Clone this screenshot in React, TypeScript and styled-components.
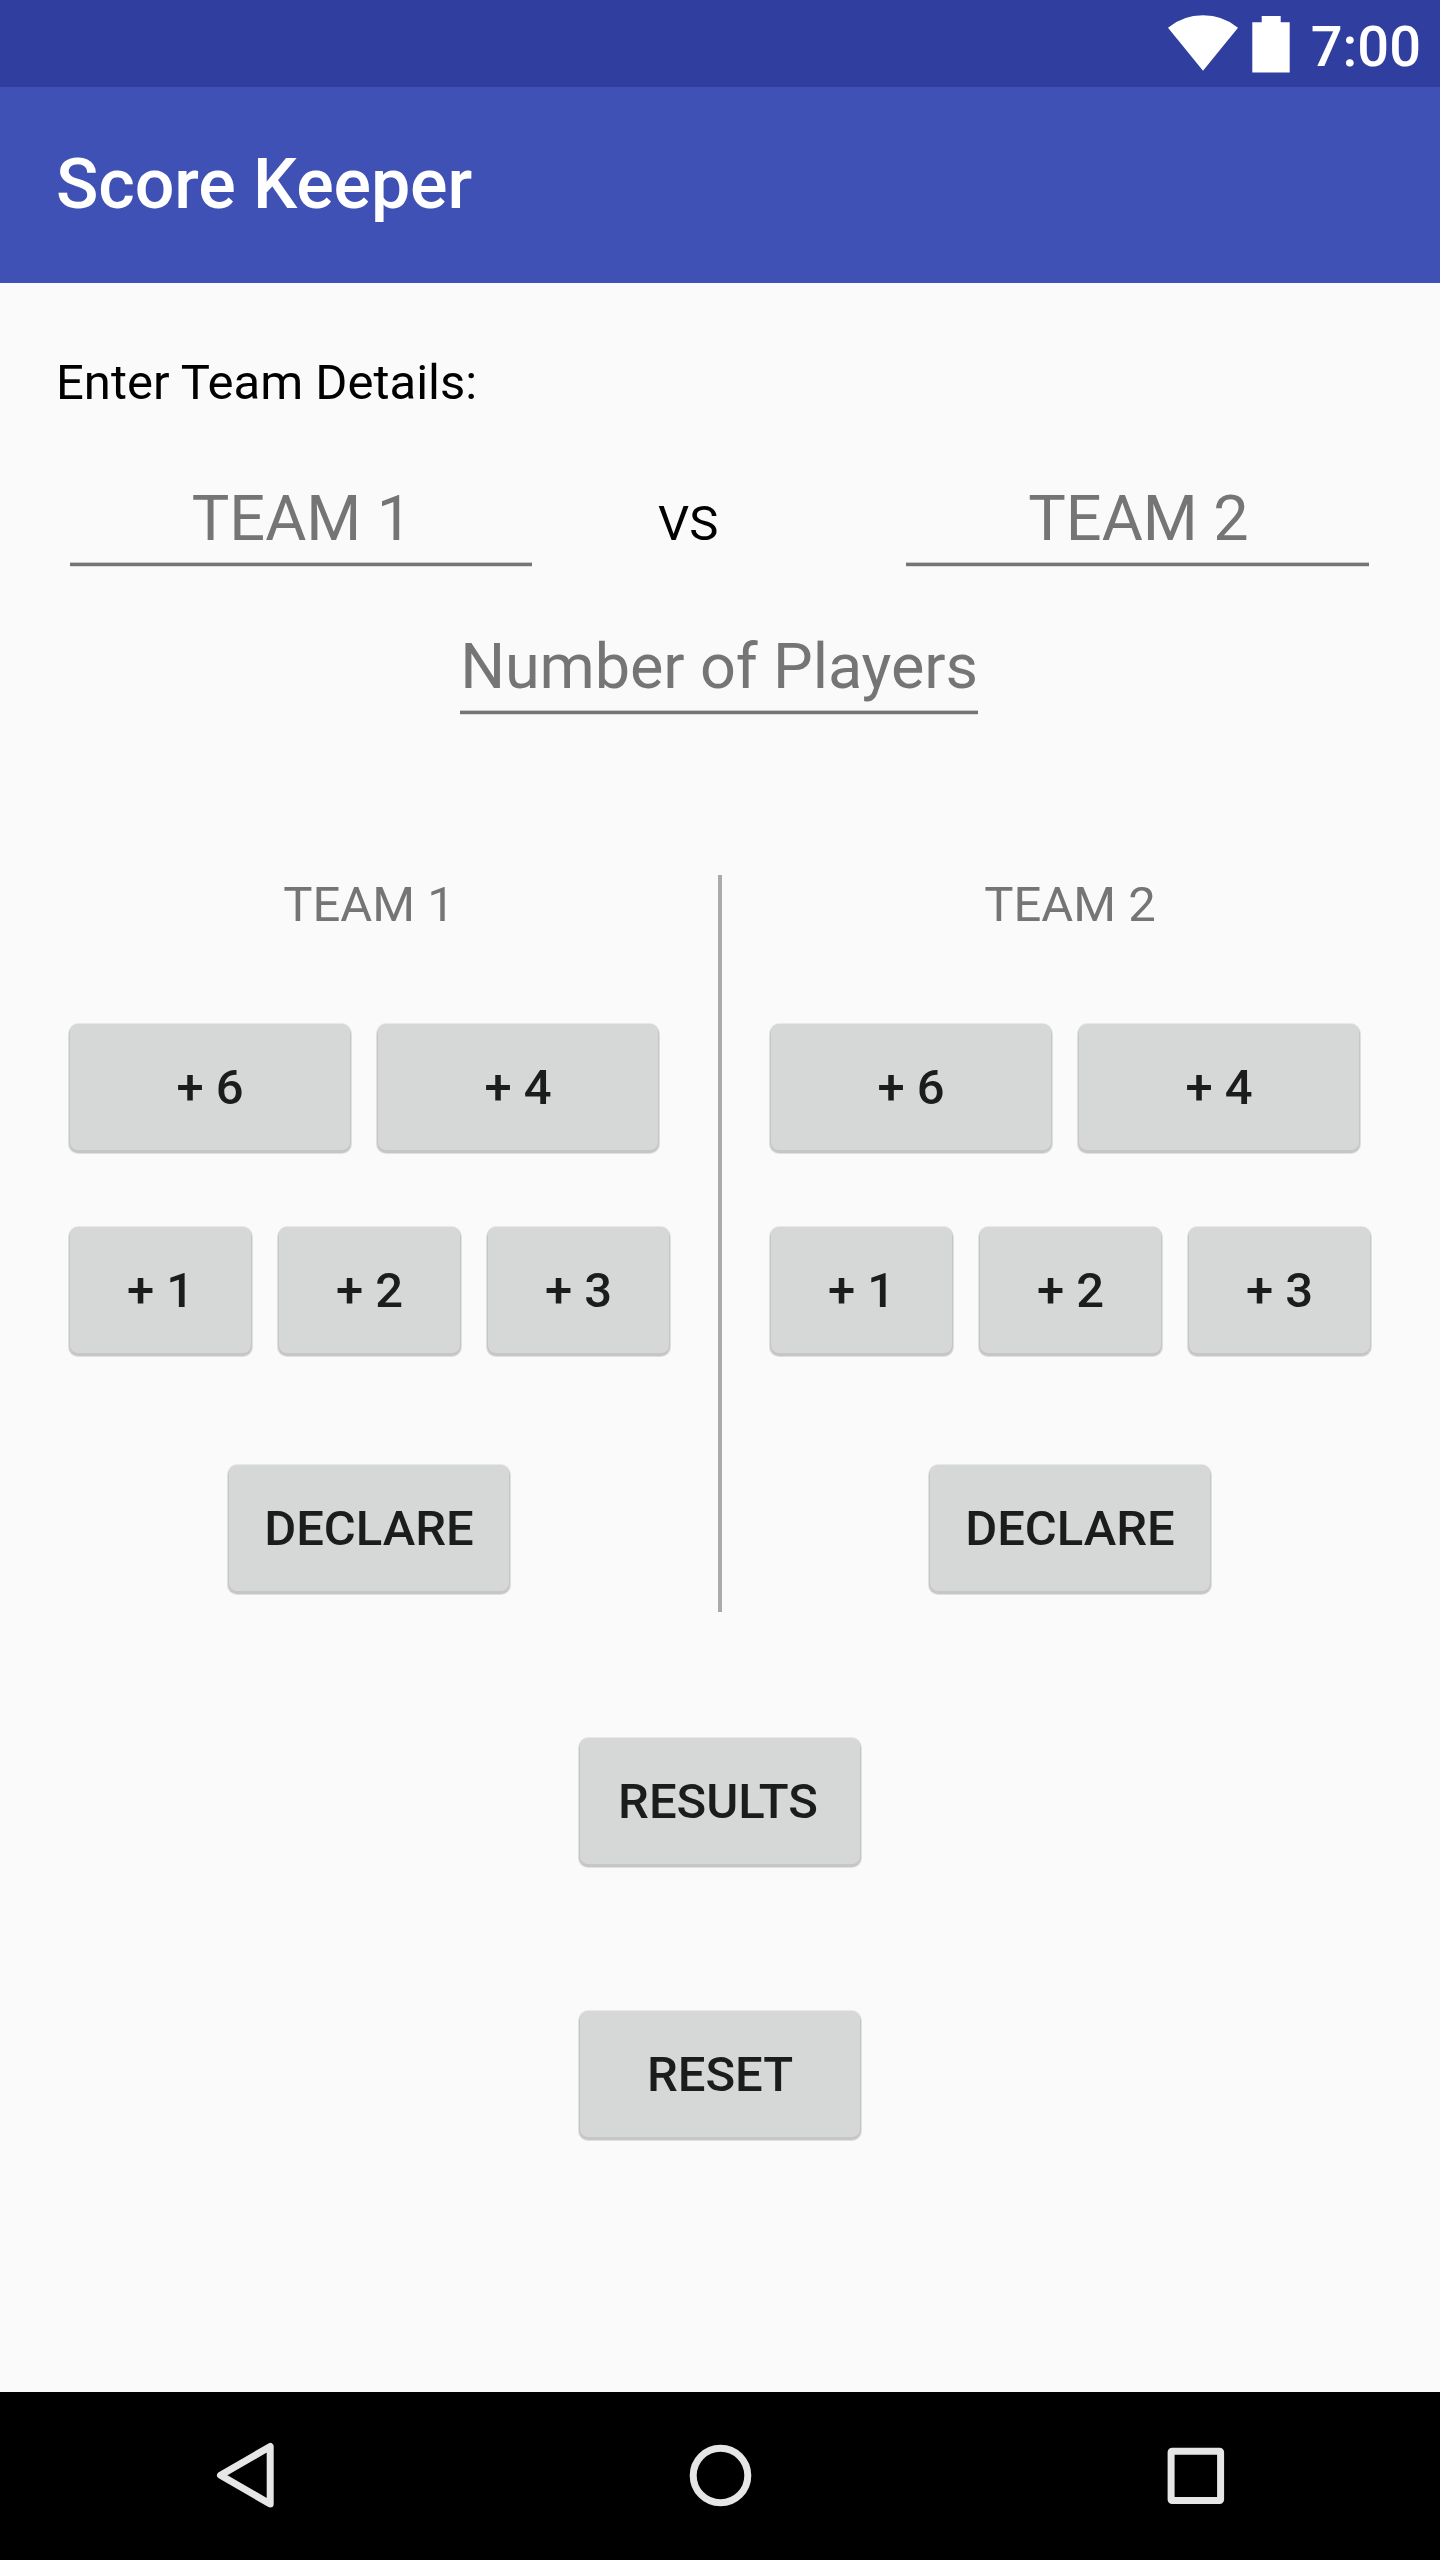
import React from "react";
import styled, { createGlobalStyle } from "styled-components";

const GlobalStyle = createGlobalStyle`
  body { margin: 0; background: #fafafa; }
  * { box-sizing: border-box; }
`;

const Screen = styled.div`
  width: 1440px;
  height: 2560px;
  display: flex;
  flex-direction: column;
  background: #fafafa;
  font-family: Roboto, "Liberation Sans", sans-serif;
  color: #000;
  overflow: hidden;
`;

const StatusBar = styled.header`
  height: 87px;
  flex: none;
  background: #303f9f;
  color: #fff;
  display: flex;
  justify-content: flex-end;
  padding-right: 19px;
`;

const StatusIcons = styled.svg`
  width: 124px;
  height: 87px;
`;

const Clock = styled.span`
  width: 129px;
  padding-top: 14px;
  font-size: 56px;
  font-weight: 500;
  line-height: 66px;
  text-align: right;
`;

const AppBar = styled.div`
  height: 196px;
  flex: none;
  background: #3f51b5;
  padding: 56px 56px 0;
`;

const Title = styled.h1`
  margin: 0;
  color: #fff;
  font-size: 70px;
  font-weight: 500;
  line-height: 82px;
  letter-spacing: -0.12px;
`;

const Content = styled.main`
  flex: 1;
  padding: 71px 56px 0;
  display: flex;
  flex-direction: column;
`;

const Caption = styled.p`
  margin: 0;
  font-size: 49px;
  line-height: 57px;
`;

const TeamsRow = styled.div`
  display: flex;
  align-items: baseline;
  height: 89px;
  margin-top: 66px;
`;

const Field = styled.div<{ $width: number }>`
  width: ${(p) => p.$width}px;
  height: 89px;
  border-bottom: 3px solid #757575;
  box-shadow: inset 0 -1px 0 #c8c8c8, 0 1px 0 #dcdcdc;
  color: #757575;
  font-size: 63px;
  line-height: 83px;
  text-align: center;
  white-space: nowrap;
`;

const TeamField = styled(Field)`
  margin: 0 14px;
  padding-left: 2px;
`;

const PlayersField = styled(Field)`
  align-self: center;
  margin: 59px 2px 0 0;
  letter-spacing: -0.12px;
`;

const Versus = styled.span`
  width: 346px;
  padding-left: 112px;
  font-size: 49px;
  line-height: 57px;
`;

const Scoreboard = styled.section`
  display: flex;
  height: 737px;
  margin-top: 161px;
`;

const Divider = styled.div`
  width: 4px;
  margin: 0 35px;
  background: #aaa;
`;

const TeamPanel = styled.div`
  flex: 1;
  display: flex;
  flex-direction: column;
`;

const TeamName = styled.h2`
  margin: 0;
  padding-right: 1px;
  color: #757575;
  font-size: 49px;
  font-weight: 400;
  line-height: 59px;
  text-align: center;
`;

const ButtonRow = styled.div<{ $top: number }>`
  display: flex;
  gap: 28px;
  padding: 0 14px;
  margin-top: ${(p) => p.$top}px;
`;

const CenteredRow = styled(ButtonRow)`
  justify-content: center;
`;

const DeclareRow = styled(CenteredRow)`
  padding-right: 15px;
`;

const Button = styled.button<{ $compact?: boolean }>`
  width: ${(p) => (p.$compact ? 181 : 280)}px;
  height: 126px;
  flex: none;
  border: 0;
  border-radius: 8px;
  padding: 1px 0 0;
  background: #d6d7d7;
  color: #1c1c1c;
  font: 500 49px / 57px Roboto, "Liberation Sans", sans-serif;
  box-shadow: 0 2px 0 1px #c6c6c6, 0 2px 0 2px #e0e0e0, 0 0 0 1px #e8e8e8;
`;

const ResultsButton = styled(Button)`
  padding-right: 4px;
`;

const NavBar = styled.nav`
  height: 168px;
  flex: none;
  background: #000;
  display: flex;
  justify-content: center;
  gap: 384px;
  align-items: center;
`;

const NavIcon = styled.svg`
  width: 91px;
  height: 84px;
  overflow: visible;
  fill: none;
  stroke: #e6e6e6;
  stroke-width: 7;
  stroke-linejoin: round;
`;

function ScorePanel({ name }: { name: string }) {
  return (
    <TeamPanel>
      <TeamName>{name}</TeamName>
      <ButtonRow $top={90}>
        <Button>+ 6</Button>
        <Button>+ 4</Button>
      </ButtonRow>
      <ButtonRow $top={77}>
        <Button $compact>+ 1</Button>
        <Button $compact>+ 2</Button>
        <Button $compact>+ 3</Button>
      </ButtonRow>
      <DeclareRow $top={112}>
        <Button>DECLARE</Button>
      </DeclareRow>
    </TeamPanel>
  );
}

export default function App() {
  return (
    <Screen>
      <GlobalStyle />
      <StatusBar>
        <StatusIcons viewBox="1168 0 124 87" fill="#fff">
          <path d="M1168 27.7Q1183 15.3 1203 15.3T1238 27.7L1203 70.7Z" />
          <path d="M1261.7 16h19v6.2h9v50.3h-37.4V22.2h9.4Z" />
        </StatusIcons>
        <Clock>7:00</Clock>
      </StatusBar>
      <AppBar>
        <Title>Score Keeper</Title>
      </AppBar>
      <Content>
        <Caption>Enter Team Details:</Caption>
        <TeamsRow>
          <TeamField $width={462}>TEAM 1</TeamField>
          <Versus>VS</Versus>
          <TeamField $width={463}>TEAM 2</TeamField>
        </TeamsRow>
        <PlayersField $width={518}>Number of Players</PlayersField>
        <Scoreboard>
          <ScorePanel name="TEAM 1" />
          <Divider />
          <ScorePanel name="TEAM 2" />
        </Scoreboard>
        <CenteredRow $top={126}>
          <ResultsButton>RESULTS</ResultsButton>
        </CenteredRow>
        <CenteredRow $top={147}>
          <Button>RESET</Button>
        </CenteredRow>
      </Content>
      <NavBar>
        <NavIcon viewBox="200 2434 91 84">
          <path d="M270.2 2446.5V2504L220.5 2475.3Z" />
        </NavIcon>
        <NavIcon viewBox="674.5 2434 91 84">
          <circle cx="720" cy="2475.5" r="27.3" />
        </NavIcon>
        <NavIcon viewBox="1149.5 2434 91 84">
          <rect x="1170.6" y="2451.3" width="49.5" height="49.3" rx="1" />
        </NavIcon>
      </NavBar>
    </Screen>
  );
}
